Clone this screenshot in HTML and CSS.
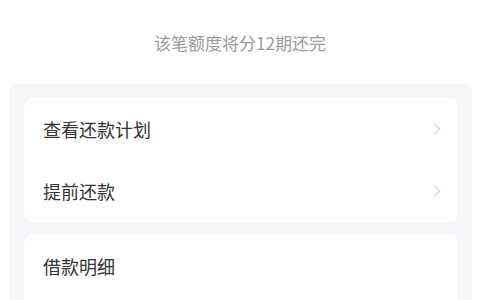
FILE: index.html
```html
<!DOCTYPE html>
<html lang="zh-CN">
<head>
<meta charset="utf-8">
<link rel="stylesheet" href="styles.css">
</head>
<body>
<div class="head">
  <p class="sub">该笔额度将分12期还完</p>
</div>
<div class="panel">
  <div class="card">
    <div class="row"><span>查看还款计划</span>
      <svg class="chev" width="8" height="14" viewBox="0 0 8 14"><path d="M1.5 1.5 L6.5 7 L1.5 12.5" fill="none" stroke="#d4d4d4" stroke-width="1.3"/></svg>
    </div>
    <div class="row"><span>提前还款</span>
      <svg class="chev" width="8" height="14" viewBox="0 0 8 14"><path d="M1.5 1.5 L6.5 7 L1.5 12.5" fill="none" stroke="#d4d4d4" stroke-width="1.3"/></svg>
    </div>
  </div>
  <div class="card card2">
    <div class="row title"><span>借款明细</span></div>
  </div>
</div>
</body>
</html>
```
FILE: styles.css
```css
html, body {
  margin: 0;
  padding: 0;
  height: 300px;
  background: #ffffff;
  font-family: "Noto Sans CJK SC", "Noto Sans", sans-serif;
  overflow: hidden;
}
.head {
  height: 84px;
  display: flex;
  align-items: center;
  justify-content: center;
}
.sub {
  margin: 0;
  font-size: 17px;
  color: #9a9a9a;
  line-height: 1;
}
.panel {
  margin: 0 8px 0 10px;
  background: #f3f5f8;
  border-radius: 6px 6px 0 0;
  padding: 14px 14px 0 14px;
  display: flex;
  flex-direction: column;
  gap: 12px;
  height: 202px;
  overflow: hidden;
}
.card {
  background: #ffffff;
  border-radius: 9px;
  padding: 0 19px;
  flex: none;
}
.card2 {
  flex: 1;
  border-radius: 9px 9px 0 0;
}
.row {
  height: 62px;
  display: flex;
  align-items: center;
  justify-content: space-between;
  font-size: 18px;
  color: #333333;
}
.title {
  height: 64px;
}
.chev {
  margin-right: -2px;
}
```
